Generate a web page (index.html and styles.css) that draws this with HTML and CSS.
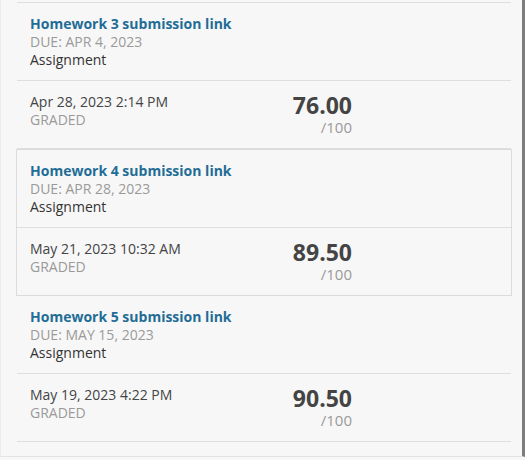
FILE: index.html
```html
<!DOCTYPE html>
<html lang="en">
<head>
  <meta charset="UTF-8" />
  <meta name="viewport" content="width=device-width, initial-scale=1.0" />
  <title>Grades</title>
  <link rel="stylesheet" href="styles.css">
</head>
<body>
  <div class="page">
    <ul class="grades">
      <li class="item">
        <div class="item-head">
          <a class="title" href="#">Homework 3 submission link</a>
          <div class="due">DUE: APR 4, 2023</div>
          <div class="type">Assignment</div>
        </div>
        <div class="item-grade">
          <div class="when">
            <div class="date">Apr 28, 2023 2:14 PM</div>
            <div class="status">GRADED</div>
          </div>
          <div class="score">
            <div class="points">76.00</div>
            <div class="outof">/100</div>
          </div>
        </div>
      </li>
      <li class="item selected">
        <div class="item-head">
          <a class="title" href="#">Homework 4 submission link</a>
          <div class="due">DUE: APR 28, 2023</div>
          <div class="type">Assignment</div>
        </div>
        <div class="item-grade">
          <div class="when">
            <div class="date">May 21, 2023 10:32 AM</div>
            <div class="status">GRADED</div>
          </div>
          <div class="score">
            <div class="points">89.50</div>
            <div class="outof">/100</div>
          </div>
        </div>
      </li>
      <li class="item">
        <div class="item-head">
          <a class="title" href="#">Homework 5 submission link</a>
          <div class="due">DUE: MAY 15, 2023</div>
          <div class="type">Assignment</div>
        </div>
        <div class="item-grade">
          <div class="when">
            <div class="date">May 19, 2023 4:22 PM</div>
            <div class="status">GRADED</div>
          </div>
          <div class="score">
            <div class="points">90.50</div>
            <div class="outof">/100</div>
          </div>
        </div>
      </li>
    </ul>
  </div>
</body>
</html>
```

FILE: styles.css
```css
body {
  margin: 0;
  padding: 0;
  font-family: 'Open Sans', Arial, sans-serif;
  font-size: 14px;
  background-color: #f7f7f7;
  color: #333;
}
.page {
  height: 457px;
  box-sizing: border-box;
  padding: 2px 11px 0 16px;
  border-left: 1px solid #ececec;
  border-right: 3px solid #7d7d7d;
  border-bottom: 1px solid #e2e2e2;
}
.grades {
  list-style: none;
  margin: 0;
  padding: 0;
  border-top: 1px solid #dedede;
}
.item {
  border: 1px solid transparent;
  border-top: none;
  margin: 0 -1px;
}
.item.selected {
  border-color: #dcdcdc;
  border-top: 1px solid #dcdcdc;
  margin-top: -1px;
}
.item-head {
  padding: 12px 14px 11px 13px;
  line-height: 18px;
  border-bottom: 1px solid #dedede;
}
.title {
  display: block;
  color: #1f6d96;
  font-weight: 700;
  text-decoration: none;
}
.due {
  color: #9a9a9a;
}
.type {
  color: #333;
}
.item-grade {
  display: grid;
  grid-template-columns: 233px 89px;
  padding: 11px 14px 12px 13px;
  border-bottom: 1px solid #dedede;
}
.item.selected .item-grade {
  border-bottom: none;
}
.date {
  line-height: 18px;
  color: #444;
  margin-top: 1px;
}
.status {
  line-height: 18px;
  color: #9a9a9a;
}
.score {
  text-align: right;
}
.points {
  font-size: 23px;
  font-weight: 700;
  line-height: 25px;
  color: #444;
  margin-top: 1px;
}
.outof {
  line-height: 18px;
  color: #9a9a9a;
  font-size: 15px;
}
```
